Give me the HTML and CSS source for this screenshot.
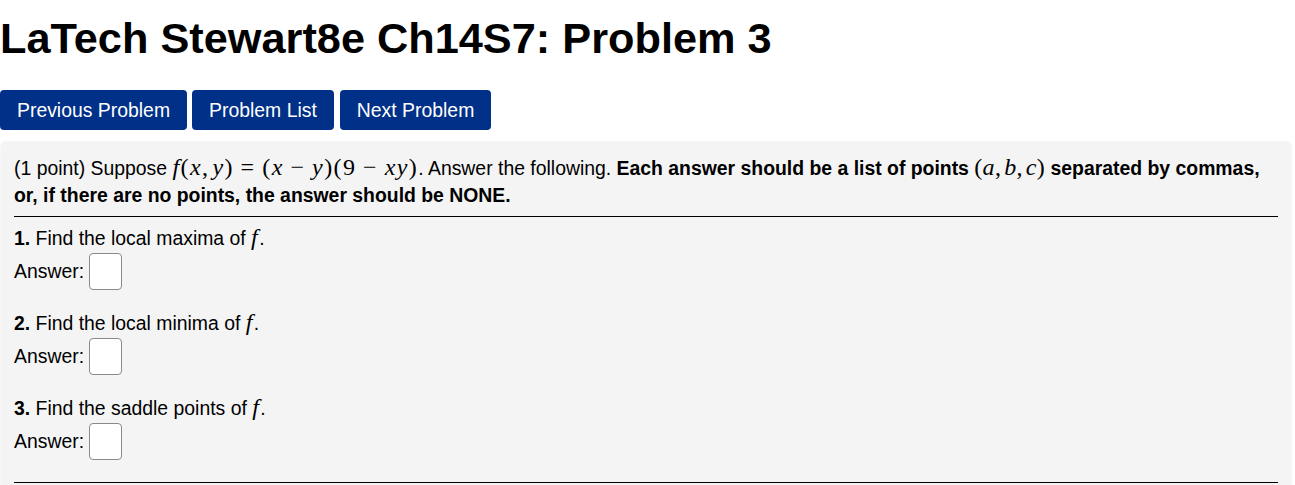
FILE: index.html
```html
<!DOCTYPE html>
<html>
<head>
<meta charset="utf-8">
<link rel="stylesheet" href="styles.css">
</head>
<body>
<h1 class="title">LaTech Stewart8e Ch14S7: Problem 3</h1>
<div class="nav">
  <a class="btn">Previous Problem</a>
  <a class="btn">Problem List</a>
  <a class="btn btn-next">Next Problem</a>
</div>
<div class="problem">
  <p class="intro">(1 point) Suppose <span class="math"><i>f</i>(<i>x</i>,<span class="thin"></span><i>y</i>)<span class="rel">=</span>(<i>x</i><span class="op">&#8722;</span><i>y</i>)(9<span class="op">&#8722;</span><i>xy</i>)</span>. Answer the following. <b>Each answer should be a list of points <span class="math nb">(<i>a</i>,<span class="thin"></span><i>b</i>,<span class="thin"></span><i>c</i>)</span> separated by commas, or, if there are no points, the answer should be NONE.</b></p>
  <hr class="rule">
  <div class="part">
    <p class="q"><b>1.</b> Find the local maxima of <span class="math"><i>f</i></span>.</p>
    <p class="ans">Answer: <span class="box"></span></p>
  </div>
  <div class="part">
    <p class="q"><b>2.</b> Find the local minima of <span class="math"><i>f</i></span>.</p>
    <p class="ans">Answer: <span class="box"></span></p>
  </div>
  <div class="part">
    <p class="q"><b>3.</b> Find the saddle points of <span class="math"><i>f</i></span>.</p>
    <p class="ans">Answer: <span class="box"></span></p>
  </div>
  <hr class="rule rule-end">
</div>
</body>
</html>
```
FILE: styles.css
```css
html, body {
  margin: 0;
  padding: 0;
  background: #ffffff;
  font-family: "Liberation Sans", Arial, sans-serif;
  color: #000;
}
.title {
  margin: 0;
  padding: 14px 0 0 0;
  font-size: 43.3px;
  font-weight: bold;
  line-height: 48px;
}
.nav {
  display: flex;
  gap: 5px;
  margin-top: 28px;
}
.btn {
  display: flex;
  align-items: center;
  justify-content: center;
  height: 40px;
  box-sizing: border-box;
  background: #003087;
  color: #fff;
  font-size: 19.4px;
  border-radius: 4px;
  padding: 0 17px;
}
.btn-next { margin-left: 1px; }
.problem {
  margin: 12px 4px 0 1px;
  background: #f4f4f4;
  border-radius: 5px;
  box-shadow: 0 0 2px rgba(0,0,0,0.12);
  padding: 13px 13px 4px 13px;
  font-size: 19.4px;
  line-height: 27px;
}
.intro { margin: 0; }
.math {
  font-family: "Liberation Serif", "Times New Roman", serif;
  font-size: 24px;
  font-weight: normal;
  letter-spacing: 1.4px;
  line-height: 20px;
}
.math i { font-style: italic; }
.rel, .op { margin: 0 0.28em; }
.thin { display: inline-block; width: 3px; }
.nb { white-space: nowrap; letter-spacing: 0.3px; }
.rule {
  border: 0;
  border-top: 1px solid #000;
  margin: 7px 0 8px 0;
}
.part { margin: 0 0 19px 0; }
.q { margin: 0; line-height: 27px; }
.ans {
  margin: 0;
  display: flex;
  align-items: center;
  gap: 5px;
  height: 39px;
}
.box {
  display: inline-block;
  width: 31px;
  height: 35px;
  background: #fff;
  border: 1px solid #8a8a8a;
  border-radius: 4px;
}
.rule-end { margin-top: 21px; }
```
